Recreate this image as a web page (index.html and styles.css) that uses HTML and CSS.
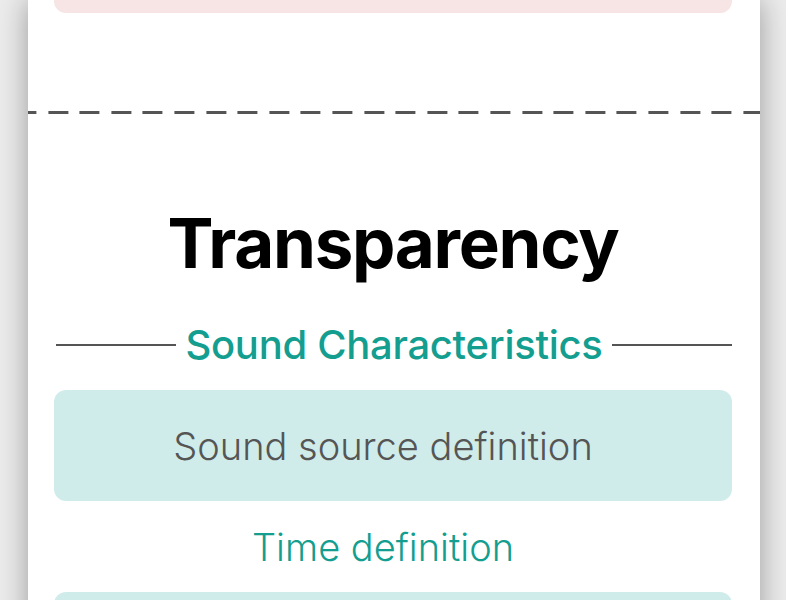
FILE: index.html
```html
<!DOCTYPE html>
<html lang="en">
<head>
  <meta charset="UTF-8">
  <meta name="viewport" content="width=device-width, initial-scale=1.0">
  <title>Transparency</title>
  <link rel="stylesheet" href="styles.css">
</head>
<body>
  <main class="sheet">
    <!-- bloco anterior (cortado no topo) -->
    <div class="note-box"></div>

    <hr class="divider">

    <section class="topic">
      <h1>Transparency</h1>

      <div class="label-row">
        <span class="rule"></span>
        <h2>Sound Characteristics</h2>
        <span class="rule"></span>
      </div>

      <div class="item-box">Sound source definition</div>
      <p class="item-text">Time definition</p>
      <div class="item-box"></div>
    </section>
  </main>
</body>
</html>
```

FILE: styles.css
```css
/* Reset básico */
* {
  margin: 0;
  padding: 0;
  box-sizing: border-box;
}

body {
  font-family: Inter, "Noto Sans", sans-serif;
  background-color: #ececec;
  color: #333;
  overflow: hidden;
  height: 600px;
}

.sheet {
  margin: 0 26px 0 28px;
  min-height: 700px;
  background-color: #ffffff;
  box-shadow: 0 0 28px rgba(0, 0, 0, 0.35);
  padding: 0 28px 0 26px;
}

.note-box {
  height: 13px;
  background-color: #f7e4e4;
  border-radius: 0 0 12px 12px;
}

.divider {
  border: none;
  height: 3px;
  margin: 98px -28px 0 -26px;
  background-image: repeating-linear-gradient(90deg, #555 0 20px, transparent 20px 31.6px);
  background-position: -11.6px 0;
}

.topic {
  display: flex;
  flex-direction: column;
}

.topic h1 {
  font-size: 69px;
  font-weight: 700;
  letter-spacing: -1.3px;
  color: #000;
  text-align: center;
  line-height: 90px;
  margin-top: 84px;
}

.label-row {
  display: flex;
  align-items: center;
  gap: 9px;
  margin: 33px 0 0 2px;
}

.label-row h2 {
  font-size: 40px;
  font-weight: 500;
  letter-spacing: -0.3px;
  color: #139e8f;
  line-height: 48px;
  white-space: nowrap;
}

.rule {
  flex: 1;
  height: 2px;
  background-color: #555;
}

.item-box {
  height: 111px;
  margin-top: 21px;
  background-color: #d0ecea;
  border-radius: 12px;
  display: flex;
  align-items: center;
  justify-content: center;
  padding-right: 20px;
  font-size: 38px;
  font-weight: 300;
  color: #555;
}

.item-text {
  text-align: center;
  padding-right: 20px;
  font-size: 38px;
  font-weight: 300;
  color: #139e8f;
  line-height: 46px;
  margin-top: 23px;
}

.item-text + .item-box {
  margin-top: 22px;
}
```
